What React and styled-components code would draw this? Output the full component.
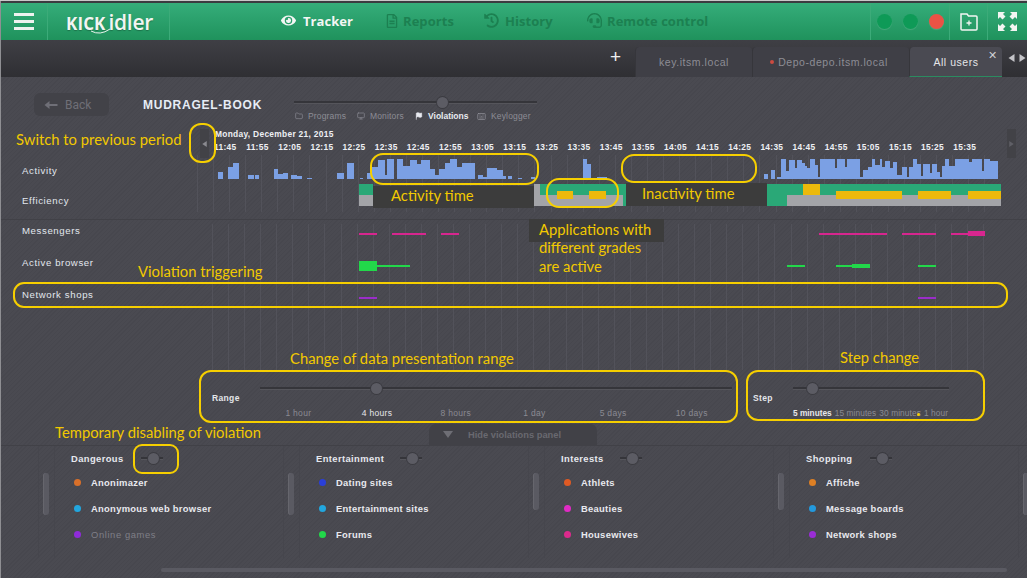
import React from 'react';
import styled, { createGlobalStyle } from 'styled-components';
import { FaHistory, FaHeadset, FaEye, FaRegFileAlt } from 'react-icons/fa';
import { Folder, Monitor, Keyboard, Flag } from 'lucide-react';

const GlobalStyle = createGlobalStyle`
  html, body { margin: 0; padding: 0; background: #48484f; }
  * { box-sizing: border-box; }
`;

const Page = styled.div`
  position: relative;
  width: 1027px;
  height: 578px;
  overflow: hidden;
  padding-top: 3px;
  font-family: "Liberation Sans", Arial, sans-serif;
  background-color: #48484f;
  background-image: repeating-linear-gradient(135deg, #47474e 0 1px, #4a4a51 1px 3px);
  border-top: 1px solid #c9c9c9;
  &::before {
    content: "";
    position: absolute;
    left: 0; right: 0; top: 0;
    height: 2px;
    background: #3b3b40;
  }
  &::after {
    content: "";
    position: absolute;
    left: 0; top: 0; bottom: 0;
    width: 1px;
    background: #8f8f93;
  }
`;

/* header */
const Header = styled.header`
  display: flex;
  align-items: stretch;
  height: 37px;
  margin-top: -1px;
  position: relative;
  background: linear-gradient(#35ad7a, #1f925c);
`;
const HeaderCell = styled.div`
  width: ${p => p.$w}px;
  display: flex;
  align-items: center;
  justify-content: ${p => p.$justify || 'center'};
  gap: ${p => p.$gap || 0}px;
  border-right: ${p => (p.$noline ? 'none' : '1px solid #3cab79')};
  border-left: ${p => (p.$leftline ? '1px solid #3cab79' : 'none')};
  padding-left: ${p => p.$pad || 0}px;
`;
const Burger = styled.div`
  width: 20px;
  height: 17px;
  margin-left: 1px;
  display: flex;
  flex-direction: column;
  justify-content: space-between;
  span { height: 3px; background: #eef3ef; }
`;
const Logo = styled.div`
  position: relative;
  font-family: "Open Sans", sans-serif;
  color: #f2f5f2;
  display: flex;
  align-items: baseline;
  margin-left: 2px;
  text-shadow: 0 1px 1px rgba(0,0,0,.25);
  b { font-size: 17px; font-weight: 700; letter-spacing: .1px; }
  i { font-size: 21px; font-style: normal; font-weight: 600; letter-spacing: -0.3px; margin-left: 3px; }
  svg { position: absolute; left: 24px; top: 20px; }
`;
const NavItem = styled.div`
  position: absolute;
  left: ${p => p.$x}px;
  top: -1px;
  height: 37px;
  display: flex;
  align-items: center;
  gap: ${p => p.$gap}px;
  font-family: "Open Sans", sans-serif;
  font-weight: 700;
  font-size: 13px;
  letter-spacing: .05px;
  color: ${p => (p.$active ? '#f4f6f4' : '#1c8051')};
`;
const HeaderRight = styled.div`
  display: flex;
  margin-left: auto;
`;
const Led = styled.span`
  width: 15px;
  height: 15px;
  border-radius: 50%;
  background: ${p => p.$color};
  box-shadow: 0 1px 1px rgba(255,255,255,.15);
`;

/* tab bar */
const TabBar = styled.div`
  height: 37px;
  display: flex;
  align-items: flex-end;
  padding-left: 610px;
  position: relative;
  background: linear-gradient(#3f3f45, #2f2f33);
`;
const AddTab = styled.div`
  width: 25px;
  align-self: flex-start;
  margin-top: 7px;
  color: #eee;
  font-size: 19px;
  line-height: 20px;
`;
const Tab = styled.div`
  position: relative;
  width: ${p => p.$w}px;
  height: 30px;
  border-radius: 4px 4px 0 0;
  display: flex;
  align-items: center;
  justify-content: center;
  gap: 4px;
  padding: 0 ${p => p.$right || 0}px 0 0;
  font-size: 10.5px;
  letter-spacing: .55px;
  background: ${p => (p.$active ? '#4a4a52' : '#3f3f46')};
  color: ${p => (p.$active ? '#e6e6e8' : '#8d8d95')};
  border-bottom: ${p => (p.$active ? '1px solid #2b8b60' : 'none')};
  border-left: 1px solid #36363b;
`;
const TabDot = styled.span`
  width: 4px;
  height: 4px;
  border-radius: 50%;
  background: #cc4b40;
`;
const TabClose = styled.span`
  position: absolute;
  right: 4px;
  top: 2px;
  font-size: 11px;
  color: #cfcfd3;
`;
const TabArrows = styled.div`
  display: flex;
  gap: 4px;
  align-self: flex-start;
  margin: 14px 0 0 6px;
`;

/* toolbar with machine name */
const Toolbar = styled.div`
  height: 50px;
  display: flex;
  padding: 16px 0 0 34px;
`;
const BackButton = styled.div`
  width: 75px;
  height: 23px;
  border-radius: 6px;
  background: #424248;
  color: #6f6f77;
  display: flex;
  align-items: center;
  gap: 7px;
  padding-left: 10px;
  font-size: 12px;
  font-family: "Roboto", sans-serif;
`;
const Title = styled.div`
  width: 151px;
  margin-left: 34px;
  padding-top: 5px;
  font-size: 12px;
  font-weight: 700;
  letter-spacing: .75px;
  color: #e6ecf5;
`;
const ViewSwitch = styled.div`
  padding-top: 8px;
`;
const Track = styled.div`
  position: relative;
  flex: none;
  width: ${p => p.$w}px;
  height: 2px;
  background: #35353a;
  box-shadow: 0 1px 0 #55555b;
`;
const Thumb = styled.span`
  position: absolute;
  left: ${p => p.$at}px;
  top: -4.5px;
  width: 11px;
  height: 11px;
  margin-left: -5.5px;
  border-radius: 50%;
  background: #5c5c64;
  box-shadow: 0 0 0 1px #3b3b41;
`;
const ViewLabels = styled.div`
  display: flex;
  margin-top: 8px;
  margin-left: 1px;
`;
const ViewLabel = styled.div`
  width: ${p => p.$w}px;
  display: flex;
  align-items: center;
  gap: 5px;
  font-size: 8.5px;
  font-weight: ${p => (p.$on ? 700 : 400)};
  letter-spacing: ${p => (p.$on ? 0 : 0.15)}px;
  color: ${p => (p.$on ? '#e8eaf0' : '#8d8d95')};
  white-space: nowrap;
`;

/* timeline */
const TimeHead = styled.div`
  position: relative;
  height: 28px;
  padding: 3px 0 0 215px;
  color: #eef0f4;
  font-weight: 700;
`;
const DateLine = styled.div`
  font-size: 8.4px;
  letter-spacing: .3px;
  line-height: 9px;
`;
const TimeLine = styled.div`
  display: flex;
  margin: 4px 0 0 -2px;
  font-size: 8.4px;
  letter-spacing: .3px;
  line-height: 9px;
`;
const TimeCell = styled.span`
  width: 32.15px;
  flex: none;
  padding-left: 1px;
`;
const PagerButton = styled.div`
  position: absolute;
  left: ${p => p.$x}px;
  top: 2px;
  width: 9px;
  height: 29px;
  background: #424247;
  display: flex;
  align-items: center;
  justify-content: center;
`;
const Group = styled.div`
  position: relative;
  height: ${p => p.$h}px;
  &::before {
    content: "";
    position: absolute;
    left: ${p => p.$from}px;
    width: ${p => 986 - p.$from}px;
    top: ${p => p.$top}px;
    bottom: ${p => p.$bottom}px;
    background: repeating-linear-gradient(90deg, #52525a 0 1px, transparent 1px 16.07px);
  }
`;
const Divider = styled.div`
  height: 1px;
  margin: 4px 0 0;
  background: #414147;
`;
const Row = styled.div`
  position: relative;
  display: flex;
  align-items: center;
  height: ${p => p.$h}px;
  margin-bottom: ${p => p.$gap || 0}px;
`;
const RowLabel = styled.div`
  width: 212px;
  padding: 0 0 2px 22px;
  flex: none;
  font-size: 9.6px;
  letter-spacing: .62px;
  color: #e2e7ee;
`;
const Plot = styled.svg`
  display: block;
  flex: none;
`;

/* range and step */
const Controls = styled.div`
  height: 54px;
  display: flex;
  padding-left: 212px;
`;
const ControlBox = styled.div`
  position: relative;
  width: ${p => p.$w}px;
  margin-left: ${p => p.$left || 0}px;
  padding-left: ${p => p.$pad}px;
  padding-top: 17px;
`;
const ControlTitle = styled.div`
  position: absolute;
  left: 0;
  top: 23px;
  font-size: 8.5px;
  font-weight: 700;
  letter-spacing: .35px;
  color: #e4e6ea;
`;
const TickRow = styled.div`
  display: flex;
  margin: 19px 0 0 ${p => p.$left || 0}px;
  gap: ${p => p.$gap || 0}px;
`;
const Tick = styled.span`
  flex: 0 0 78.7px;
  text-align: center;
  font-size: 8.5px;
  letter-spacing: .3px;
  white-space: nowrap;
  color: ${p => (p.$on ? '#e6e6ea' : '#8b8b93')};
`;
const StepTick = styled.span`
  flex: none;
  font-size: 8.3px;
  letter-spacing: ${p => (p.$on ? 0 : 0.1)}px;
  white-space: nowrap;
  font-weight: ${p => (p.$on ? 700 : 400)};
  color: ${p => (p.$on ? '#e6e6ea' : '#8b8b93')};
`;

/* violations */
const HideTab = styled.div`
  width: 168px;
  height: 21px;
  margin-left: 429px;
  border-radius: 7px 7px 0 0;
  background: #414147;
  display: flex;
  align-items: center;
  gap: 15px;
  padding-left: 14px;
  font-size: 9.3px;
  font-weight: 700;
  color: #696970;
`;
const Triangle = styled.span`
  width: 0;
  height: 0;
  border-left: 5px solid transparent;
  border-right: 5px solid transparent;
  border-top: 7px solid #6e6e75;
`;
const Panel = styled.div`
  height: 113px;
  display: flex;
  padding-left: 38px;
  border-top: 1px solid #414147;
`;
const Column = styled.div`
  flex: 0 0 245px;
  display: flex;
`;
const Gutter = styled.div`
  flex: 0 0 17px;
  padding: 27px 0 0 4px;
  border-left: 1px solid #46464d;
  border-right: 1px solid #46464d;
`;
const ScrollBar = styled.div`
  width: 6px;
  height: ${p => p.$h}px;
  border-radius: 3px;
  background: #5a5a62;
  box-shadow: inset 1px 0 0 #66666d;
`;
const ColumnBody = styled.div`
  padding: 7px 0 0 16px;
`;
const ColumnHead = styled.div`
  display: flex;
  align-items: center;
  height: 10px;
  margin-bottom: 6px;
`;
const ColumnTitle = styled.div`
  width: ${p => p.$w}px;
  font-size: 9.4px;
  font-weight: 700;
  letter-spacing: .4px;
  color: #e6e8ee;
`;
const Violation = styled.div`
  display: flex;
  align-items: center;
  height: 26px;
  padding: ${p => (p.$off ? '1px' : '0')} 0 0 3px;
  gap: 10px;
  font-size: 9.4px;
  font-weight: ${p => (p.$off ? 400 : 700)};
  letter-spacing: ${p => (p.$off ? 0.6 : 0.3)}px;
  color: ${p => (p.$off ? '#7f7f87' : '#e8e9ee')};
`;
const Dot = styled.span`
  width: 7px;
  height: 7px;
  border-radius: 50%;
  background: ${p => p.$color};
`;
const HorizontalScroll = styled.div`
  width: 846px;
  height: 4px;
  margin: 10px 0 0 161px;
  border-radius: 2px;
  background: #5a5a62;
`;

/* yellow notes placed over the screen */
const Ring = styled.div`
  position: absolute;
  left: ${p => p.$x}px;
  top: ${p => p.$y}px;
  width: ${p => p.$w}px;
  height: ${p => p.$h}px;
  border: 2px solid #f6cf00;
  border-radius: ${p => p.$r}px;
`;
const Note = styled.div`
  position: absolute;
  left: ${p => p.$x}px;
  top: ${p => p.$y}px;
  font-family: "Lato", sans-serif;
  font-size: 14.8px;
  line-height: 19px;
  color: #f2c900;
  white-space: nowrap;
`;
const NoteBox = styled(Note)`
  width: ${p => p.$w}px;
  height: ${p => p.$h}px;
  padding-left: ${p => p.$pad}px;
  line-height: ${p => p.$h - 3}px;
  background: #3c3c3c;
`;
const TinyDot = styled.span`
  position: absolute;
  left: 917px;
  top: 412px;
  width: 3px;
  height: 3px;
  border-radius: 50%;
  background: #f6cf00;
`;

const ACTIVITY = [
  [218, 223, 7], [228, 233, 12], [233, 239, 16], [248, 254, 4], [255, 259, 4], [274, 278, 10], [278, 283, 5],
  [283, 288, 6], [291, 297, 4], [297, 302, 3], [307, 312, 1], [337, 344, 6], [347, 354, 16], [360, 363, 1],
  [367, 372, 6], [372, 378, 12], [378, 385, 19], [385, 387, 4], [387, 394, 20], [397, 403, 20], [403, 410, 13],
  [410, 417, 19], [417, 421, 15], [421, 430, 19], [430, 435, 10], [435, 439, 4], [439, 445, 10], [445, 450, 16],
  [450, 457, 20], [457, 462, 12], [462, 475, 16], [478, 483, 4], [483, 487, 2], [487, 497, 11], [497, 503, 9],
  [503, 506, 3], [508, 512, 3], [518, 522, 1], [531, 535, 2], [583, 587, 20], [587, 591, 15], [597, 603, 2],
  [603, 607, 2], [764, 768, 5], [771, 775, 9], [777, 781, 2], [781, 786, 20], [786, 789, 8], [789, 795, 19],
  [795, 797, 11], [797, 802, 19], [802, 805, 16], [805, 807, 13], [807, 810, 11], [810, 815, 20], [815, 818, 14],
  [818, 820, 2], [820, 835, 20], [835, 837, 11], [837, 845, 20], [845, 847, 12], [847, 860, 20], [860, 863, 2],
  [863, 868, 9], [868, 872, 12], [872, 875, 20], [875, 880, 14], [880, 882, 20], [882, 885, 12], [885, 890, 18],
  [890, 893, 11], [893, 897, 17], [897, 902, 4], [902, 907, 12], [907, 909, 2], [909, 913, 12], [913, 917, 20],
  [917, 921, 15], [921, 923, 3], [923, 930, 15], [930, 932, 6], [932, 937, 15], [937, 940, 7], [940, 942, 2],
  [942, 945, 13], [945, 949, 20], [949, 955, 13], [955, 969, 20], [969, 972, 17], [972, 982, 20], [982, 984, 8],
  [984, 990, 20], [990, 998, 18],
];

const GREEN = '#2aa877';
const GREY = '#a3a4a8';
const GOLD = '#ecb90b';
const EFFICIENCY = [
  [359, 184, 14, 11, GREEN], [359, 195, 14, 11, GREY],
  [534, 184, 6, 22, GREY], [540, 195, 83, 11, GREY], [540, 184, 86, 11, GREEN], [623, 195, 3, 11, GREEN],
  [557, 191, 16, 8, GOLD], [589, 191, 17, 8, GOLD],
  [767, 184, 234, 11, GREEN], [767, 195, 20, 11, GREEN], [787, 195, 214, 11, GREY],
  [803, 184, 17, 11, GOLD], [836, 191, 66, 8, GOLD], [918, 191, 33, 8, GOLD], [968, 191, 33, 8, GOLD],
];

const PINK = '#d7268f';
const LIME = '#22d84a';
const PURPLE = '#9a2dc9';
const TRACKS = [
  { label: 'Messengers', top: 220, color: PINK, thin: [[359, 377], [392, 426], [441, 459], [819, 887], [902, 936], [951, 968]], thick: [[968, 985, 231, 5]] },
  { label: 'Active browser', top: 252, color: LIME, thin: [[377, 410], [787, 805], [836, 852], [918, 936]], thick: [[359, 377, 261, 10], [852, 870, 264, 4]] },
  { label: 'Network shops', top: 284, color: PURPLE, thin: [[359, 377], [918, 936]], thick: [] },
];

const TIMES = Array.from({ length: 24 }, (_, i) => {
  const total = 11 * 60 + 45 + i * 10;
  return `${Math.floor(total / 60)}:${String(total % 60).padStart(2, '0')}`;
});

const COLUMNS = [
  { title: 'Dangerous', titleW: 70, scroll: 42, items: [['Anonimazer', '#d9702a'], ['Anonymous web browser', '#22a6de'], ['Online games', '#8f2bd9', true]] },
  { title: 'Entertainment', titleW: 84, scroll: 42, items: [['Dating sites', '#2a3fd8'], ['Entertainment sites', '#22a6de'], ['Forums', '#22d84a']] },
  { title: 'Interests', titleW: 59, scroll: 37, items: [['Athlets', '#df5a24'], ['Beauties', '#e02bc4'], ['Housewives', '#dc2a8c']] },
  { title: 'Shopping', titleW: 64, scroll: 37, items: [['Affiche', '#dd7f24'], ['Message boards', '#2399dd'], ['Network shops', '#9a2dd6']] },
];

function Arrow({ dir, color, size = 7 }) {
  const d = dir === 'left' ? 'M6 0 L6 8 L0 4 Z' : 'M0 0 L0 8 L6 4 Z';
  return (
    <svg width={size} height={size + 1} viewBox="0 0 6 8">
      <path d={d} fill={color} />
    </svg>
  );
}

function FolderPlus() {
  return (
    <svg width="18" height="20" viewBox="0 0 18 20" fill="none">
      <path d="M1 2 H7 L8.5 4 H16 Q17 4 17 5 V17 Q17 18 16 18 H2 Q1 18 1 17 Z" stroke="#f2f5f2" strokeWidth="1.5" />
      <path d="M9 8.5 V13.5 M6.5 11 H11.5" stroke="#f2f5f2" strokeWidth="1.3" />
    </svg>
  );
}

function FullscreenIcon() {
  return (
    <svg width="19" height="19" viewBox="0 0 19 19" fill="#f2f5f2">
      <path d="M0 0 H7 L5 2 L7.5 4.5 L4.5 7.5 L2 5 L0 7 Z" />
      <path d="M19 0 H12 L14 2 L11.5 4.5 L14.5 7.5 L17 5 L19 7 Z" />
      <path d="M0 19 V12 L2 14 L4.5 11.5 L7.5 14.5 L5 17 L7 19 Z" />
      <path d="M19 19 V12 L17 14 L14.5 11.5 L11.5 14.5 L14 17 L12 19 Z" />
    </svg>
  );
}

function ActivityPlot() {
  return (
    <Plot width="790" height="32" viewBox="212 155 790 32">
      {ACTIVITY.map(([a, b, h]) => (
        <rect key={a} x={a} y={179 - h} width={b - a} height={h} fill="#7ba0e4" />
      ))}
    </Plot>
  );
}

function EfficiencyPlot() {
  return (
    <Plot width="790" height="28" viewBox="212 187 790 28" style={{ overflow: 'visible' }}>
      {EFFICIENCY.map(([x, y, w, h, fill], i) => (
        <rect key={i} x={x} y={y} width={w} height={h} fill={fill} />
      ))}
    </Plot>
  );
}

function TrackPlot({ track }) {
  return (
    <Plot width="790" height="22" viewBox={`212 ${track.top} 790 22`}>
      {track.thin.map(([a, b]) => (
        <rect key={a} x={a} y={track.top + 13} width={b - a} height="2" fill={track.color} />
      ))}
      {track.thick.map(([a, b, y, h]) => (
        <rect key={a} x={a} y={y} width={b - a} height={h} fill={track.color} />
      ))}
    </Plot>
  );
}

export default function App() {
  return (
    <Page>
      <GlobalStyle />
      <Header>
        <HeaderCell $w={48}>
          <Burger><span /><span /><span /></Burger>
        </HeaderCell>
        <HeaderCell $w={122}>
          <Logo>
            <b>KICK</b><i>idler</i>
            <svg width="24" height="8" viewBox="0 0 24 8" fill="none">
              <path d="M1 3 Q10 8 20 1" stroke="#e9f2ec" strokeWidth="1" />
            </svg>
          </Logo>
        </HeaderCell>
        <NavItem $x={281} $gap={7} $active><FaEye size={15} />Tracker</NavItem>
        <NavItem $x={385} $gap={4}><FaRegFileAlt size={14} />Reports</NavItem>
        <NavItem $x={484} $gap={6}><FaHistory size={15} />History</NavItem>
        <NavItem $x={587} $gap={5}><FaHeadset size={15} />Remote control</NavItem>
        <HeaderRight>
          <HeaderCell $w={80} $gap={11} $leftline>
            <Led $color="#0e9a57" />
            <Led $color="#0e9a57" />
            <Led $color="#ea5245" />
          </HeaderCell>
          <HeaderCell $w={38}><FolderPlus /></HeaderCell>
          <HeaderCell $w={39} $noline><FullscreenIcon /></HeaderCell>
        </HeaderRight>
      </Header>

      <TabBar>
        <AddTab>+</AddTab>
        <Tab $w={117}>key.itsm.local</Tab>
        <Tab $w={157} $right={4}><TabDot />Depo-depo.itsm.local</Tab>
        <Tab $w={93} $active>All users<TabClose>✕</TabClose></Tab>
        <TabArrows>
          <Arrow dir="left" color="#c4c4c8" />
          <Arrow dir="right" color="#c4c4c8" />
        </TabArrows>
      </TabBar>

      <Toolbar>
        <BackButton>
          <svg width="14" height="8" viewBox="0 0 13 8"><path d="M0 4 L5 0 V3 H13 V5 H5 V8 Z" fill="#6f6f77" /></svg>
          Back
        </BackButton>
        <Title>MUDRAGEL-BOOK</Title>
        <ViewSwitch>
          <Track $w={243}><Thumb $at={148} /></Track>
          <ViewLabels>
            <ViewLabel $w={62}><Folder size={8} />Programs</ViewLabel>
            <ViewLabel $w={58}><Monitor size={8} />Monitors</ViewLabel>
            <ViewLabel $w={62} $on><Flag size={8} fill="#e8eaf0" />Violations</ViewLabel>
            <ViewLabel $w={60}><Keyboard size={9} />Keylogger</ViewLabel>
          </ViewLabels>
        </ViewSwitch>
      </Toolbar>

      <TimeHead>
        <PagerButton $x={200}><Arrow dir="left" color="#8a8a90" size={5} /></PagerButton>
        <PagerButton $x={1007}><Arrow dir="right" color="#5f5f66" size={5} /></PagerButton>
        <DateLine>Monday, December 21, 2015</DateLine>
        <TimeLine>
          {TIMES.map(t => <TimeCell key={t}>{t}</TimeCell>)}
        </TimeLine>
      </TimeHead>

      <Group $h={60} $from={197} $top={0} $bottom={3}>
        <Row $h={32}>
          <RowLabel>Activity</RowLabel>
          <ActivityPlot />
        </Row>
        <Row $h={28}>
          <RowLabel>Efficiency</RowLabel>
          <EfficiencyPlot />
        </Row>
      </Group>
      <Divider />

      <Group $h={150} $from={212} $top={4} $bottom={0}>
        {TRACKS.map(track => (
          <Row key={track.label} $h={22} $gap={10}>
            <RowLabel>{track.label}</RowLabel>
            <TrackPlot track={track} />
          </Row>
        ))}
      </Group>

      <Controls>
        <ControlBox $w={535} $pad={48}>
          <ControlTitle>Range</ControlTitle>
          <Track $w={472}><Thumb $at={116} /></Track>
          <TickRow $left={-1}>
            {['1 hour', '4 hours', '8 hours', '1 day', '5 days', '10 days'].map((t, i) => (
              <Tick key={t} $on={i === 1}>{t}</Tick>
            ))}
          </TickRow>
        </ControlBox>
        <ControlBox $w={237} $pad={40} $left={6}>
          <ControlTitle>Step</ControlTitle>
          <Track $w={156}><Thumb $at={19} /></Track>
          <TickRow $gap={3}>
            <StepTick $on>5 minutes</StepTick>
            <StepTick>15 minutes</StepTick>
            <StepTick>30 minutes</StepTick>
            <StepTick>1 hour</StepTick>
          </TickRow>
        </ControlBox>
      </Controls>

      <HideTab><Triangle />Hide violations panel</HideTab>
      <Panel>
        {COLUMNS.map(col => (
          <Column key={col.title}>
            <Gutter><ScrollBar $h={col.scroll} /></Gutter>
            <ColumnBody>
              <ColumnHead>
                <ColumnTitle $w={col.titleW}>{col.title}</ColumnTitle>
                <Track $w={22}><Thumb $at={12} /></Track>
              </ColumnHead>
              {col.items.map(([name, color, off]) => (
                <Violation key={name} $off={off}>
                  <Dot $color={color} />{name}
                </Violation>
              ))}
            </ColumnBody>
          </Column>
        ))}
        <Column><Gutter><ScrollBar $h={42} /></Gutter></Column>
      </Panel>
      <HorizontalScroll />

      <NoteBox $x={373} $y={185} $w={161} $h={22} $pad={18}>Activity time</NoteBox>
      <NoteBox $x={626} $y={182} $w={141} $h={23} $pad={16}>Inactivity time</NoteBox>
      <NoteBox $x={529} $y={218} $w={135} $h={23} $pad={10}>Applications with</NoteBox>
      <Note $x={539} $y={237}>different grades</Note>
      <Note $x={539} $y={256}>are active</Note>
      <Note $x={16} $y={129}>Switch to previous period</Note>
      <Note $x={138} $y={261}>Violation triggering</Note>
      <Note $x={290} $y={348}>Change of data presentation range</Note>
      <Note $x={840} $y={347}>Step change</Note>
      <Note $x={55} $y={422}>Temporary disabling of violation</Note>

      <Ring $x={189} $y={122} $w={27} $h={40} $r={12} />
      <Ring $x={370} $y={152} $w={169} $h={32} $r={13} />
      <Ring $x={546} $y={177} $w={73} $h={30} $r={13} />
      <Ring $x={621} $y={153} $w={136} $h={29} $r={13} />
      <Ring $x={13} $y={281} $w={995} $h={26} $r={11} />
      <Ring $x={199} $y={369} $w={539} $h={53} $r={12} />
      <Ring $x={746} $y={369} $w={239} $h={51} $r={12} />
      <Ring $x={133} $y={443} $w={46} $h={30} $r={9} />
      <TinyDot />
    </Page>
  );
}
